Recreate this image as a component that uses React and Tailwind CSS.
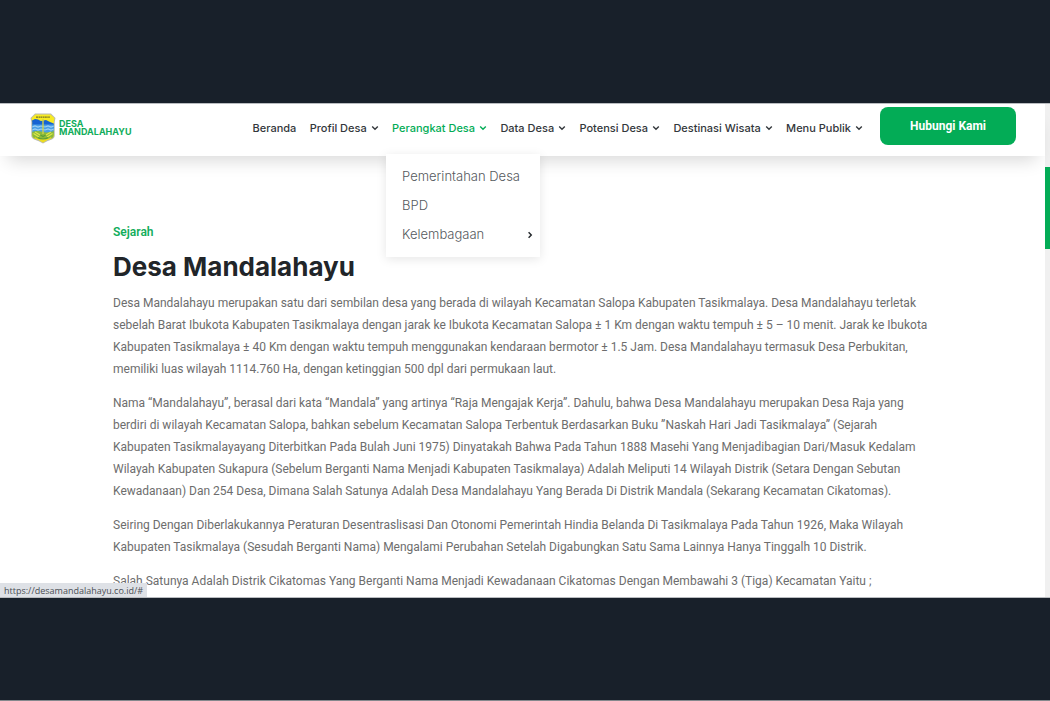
import React from "react";

const menu = [
  { label: "Beranda" },
  { label: "Profil Desa", arrow: true },
  {
    label: "Perangkat Desa",
    arrow: true,
    active: true,
    items: [{ label: "Pemerintahan Desa" }, { label: "BPD" }, { label: "Kelembagaan", arrow: true }],
  },
  { label: "Data Desa", arrow: true },
  { label: "Potensi Desa", arrow: true },
  { label: "Destinasi Wisata", arrow: true },
  { label: "Menu Publik", arrow: true },
];

const paragraphs = [
  [
    "Desa Mandalahayu merupakan satu dari sembilan desa yang berada di wilayah Kecamatan Salopa Kabupaten Tasikmalaya. Desa Mandalahayu terletak",
    "sebelah Barat Ibukota Kabupaten Tasikmalaya dengan jarak ke Ibukota Kecamatan Salopa ± 1 Km dengan waktu tempuh ± 5 – 10 menit. Jarak ke Ibukota",
    "Kabupaten Tasikmalaya ± 40 Km dengan waktu tempuh menggunakan kendaraan bermotor ± 1.5 Jam. Desa Mandalahayu termasuk Desa Perbukitan,",
    "memiliki luas wilayah 1114.760 Ha, dengan ketinggian 500 dpl dari permukaan laut.",
  ],
  [
    "Nama “Mandalahayu”, berasal dari kata “Mandala” yang artinya “Raja Mengajak Kerja”. Dahulu, bahwa Desa Mandalahayu merupakan Desa Raja yang",
    "berdiri di wilayah Kecamatan Salopa, bahkan sebelum Kecamatan Salopa Terbentuk Berdasarkan Buku ”Naskah Hari Jadi Tasikmalaya” (Sejarah",
    "Kabupaten Tasikmalayayang Diterbitkan Pada Bulah Juni 1975) Dinyatakah Bahwa Pada Tahun 1888 Masehi Yang Menjadibagian Dari/Masuk Kedalam",
    "Wilayah Kabupaten Sukapura (Sebelum Berganti Nama Menjadi Kabupaten Tasikmalaya) Adalah Meliputi 14 Wilayah Distrik (Setara Dengan Sebutan",
    "Kewadanaan) Dan 254 Desa, Dimana Salah Satunya Adalah Desa Mandalahayu Yang Berada Di Distrik Mandala (Sekarang Kecamatan Cikatomas).",
  ],
  [
    "Seiring Dengan Diberlakukannya Peraturan Desentraslisasi Dan Otonomi Pemerintah Hindia Belanda Di Tasikmalaya Pada Tahun 1926, Maka Wilayah",
    "Kabupaten Tasikmalaya (Sesudah Berganti Nama) Mengalami Perubahan Setelah Digabungkan Satu Sama Lainnya Hanya Tinggalh 10 Distrik.",
  ],
  [
    "Salah Satunya Adalah Distrik Cikatomas Yang Berganti Nama Menjadi Kewadanaan Cikatomas Dengan Membawahi 3 (Tiga) Kecamatan Yaitu ;",
  ],
];

function Chevron({ className = "" }) {
  return (
    <svg viewBox="0 0 8 8" className={`size-2 shrink-0 ${className}`} fill="none" stroke="currentColor" strokeWidth="1.4" aria-hidden="true">
      <path d="M1.2 2.6 4 5.3 6.8 2.6" />
    </svg>
  );
}

function Crest() {
  return (
    <svg viewBox="0 0 26 31" className="h-[31px] w-[26px] shrink-0" aria-hidden="true">
      <defs>
        <clipPath id="shield">
          <path d="M5.5 1.500h15L24.500 5 23.800 9v13c0 3-3.500 4-7 5.200L13 29.500l-3.800-2.300C5.700 26 2.200 25 2.200 22V9L1.500 5z" />
        </clipPath>
      </defs>
      <path d="M5 .5h16L25.500 5l-.8 4v13.500c0 3.500-4 4.500-7.500 5.700L13 30.500l-4.200-2.300C5.300 27 1.300 26 1.300 22.500V9L.5 5z" fill="#b9bab2" />
      <g clipPath="url(#shield)">
        <path d="M0 0h26v31H0z" fill="#f7ea22" />
        <path d="M2 12V7.500L5 6l3 .5 3 1.500 5-1 4 2 5 2v6H2z" fill="#1663d2" />
        <path d="M2 11.500h22V20H2z" fill="#4a9fe6" />
        <path d="m2 14 3-1 3 1 3-1 4 1 3-1 3 1 3-1M2 17l3-1 3 1 3-1 4 1 3-1 3 1 3-1" fill="none" stroke="#9bd0f4" strokeWidth="1.200" />
        <path d="M2 19c4-1.500 7-1 11 0s8 0 11-1v8H2z" fill="#8dba3a" />
        <path d="M3.500 20.500 9 24m13.500-3.500L17 24M5 19l5 3m11-3-5 3" stroke="#dfe64a" strokeWidth="1.300" />
        <path d="M12.300 6h1.400v15h-1.400z" fill="#cfd04c" />
        <path d="M5 24c2 3 14 3 16 0l1 3L13 30l-9-3z" fill="#ecdc21" />
        <path d="M8 24.500c2 2 8 2 10 0M10.500 22l2.500 1.500 2.500-1.500" fill="none" stroke="#5c9f37" strokeWidth="1.100" />
      </g>
      <path d="M6 4.100h14" stroke="#77742a" strokeWidth="1.100" strokeDasharray="2 .5 1.500 .4" />
    </svg>
  );
}

function SubMenu({ items }) {
  return (
    <ul className="absolute top-[34px] -left-1.5 z-20 w-[154px] bg-white pt-2 pb-2 shadow-[0_2px_10px_rgba(0,0,0,0.10)]">
      {items.map((item) => (
        <li key={item.label}>
          <a href="#" className="flex h-[29px] items-center justify-between pr-1.5 pl-4 text-[13px] font-light text-[#55595d]">
            {item.label}
            {item.arrow && <Chevron className="-rotate-90 text-[#212529]" />}
          </a>
        </li>
      ))}
    </ul>
  );
}

function Header() {
  return (
    <header className="relative z-10 flex h-[52px] items-center bg-white pr-[29px] pl-[30px] font-['Inter',sans-serif] shadow-[0_12px_18px_-8px_rgba(0,0,0,0.16)]">
      <a href="#" className="mb-1 flex items-center gap-[3px] text-[9px] leading-[8px] font-bold text-[#12ad5b]">
        <Crest />
        <span>
          DESA
          <br />
          MANDALAHAYU
        </span>
      </a>
      <nav className="mb-1 ml-[121px] flex-1">
        <ul className="flex items-center justify-between">
          {menu.map((entry) => (
            <li key={entry.label} className="relative">
              <a
                href="#"
                className={`flex items-center gap-1 text-[11px] leading-4 font-medium whitespace-nowrap ${entry.active ? "text-[#03ac56]" : "text-[#33373b]"}`}
              >
                {entry.label}
                {entry.arrow && <Chevron />}
              </a>
              {entry.items && <SubMenu items={entry.items} />}
            </li>
          ))}
        </ul>
      </nav>
      <button
        type="button"
        className="mb-2 ml-[17px] h-[38px] w-[136px] rounded-lg bg-[#03ac56] font-['Roboto',sans-serif] text-[12px] font-bold text-white"
      >
        Hubungi Kami
      </button>
    </header>
  );
}

export default function App() {
  return (
    <div className="flex min-h-screen flex-col border-b border-[#85888d] bg-[#18202a]">
      <div className="relative mt-[103px] flex border-y border-[#b9bcc0] bg-white">
        <div className="min-w-0 flex-1">
          <Header />
          <main className="pt-[66px] pr-8 pb-[5px] pl-[113px] font-['Roboto',sans-serif]">
            <p className="text-[12px] leading-5 font-semibold text-[#12ad5b]">Sejarah</p>
            <h1 className="mt-2 mb-2 font-['Inter',sans-serif] text-[26px] leading-[34px] font-bold text-[#212529]">Desa Mandalahayu</h1>
            <div className="space-y-3 text-[12px] leading-[22px] text-[#6d6d6d]">
              {paragraphs.map((lines) => (
                <p key={lines[0]}>
                  {lines.map((line) => (
                    <span key={line} className="block">
                      {line}{" "}
                    </span>
                  ))}
                </p>
              ))}
            </div>
          </main>
        </div>
        <div className="w-[5px] shrink-0 bg-[#f0f0f0] pt-[63px]">
          <div className="h-[82px] bg-[#03ac56]" />
        </div>
        <div className="absolute bottom-0 left-0 h-3.5 bg-[#dee1e6] pr-1 pl-1 font-['Open_Sans',sans-serif] text-[9px] leading-4 text-[#4b4f55]">
          https://desamandalahayu.co.id/#
        </div>
      </div>
    </div>
  );
}
